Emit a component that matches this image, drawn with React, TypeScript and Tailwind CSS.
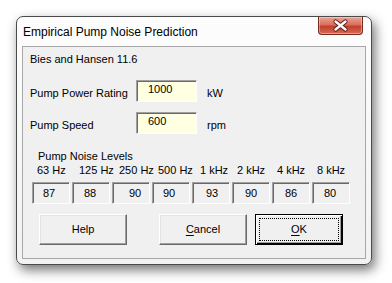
const FONT = "font-['Liberation_Sans',Arial,sans-serif]";

type Band = { label: string; value: string; lp: number; vp: number };

const BANDS: Band[] = [
  { label: "63 Hz", value: "87", lp: 6, vp: 11 },
  { label: "125 Hz", value: "88", lp: 8, vp: 12 },
  { label: "250 Hz", value: "90", lp: 8, vp: 17 },
  { label: "500 Hz", value: "90", lp: 7, vp: 11 },
  { label: "1 kHz", value: "93", lp: 9, vp: 14 },
  { label: "2 kHz", value: "90", lp: 6, vp: 13 },
  { label: "4 kHz", value: "86", lp: 6, vp: 13 },
  { label: "8 kHz", value: "80", lp: 6, vp: 12 },
];

function CloseButton() {
  return (
    <div className="ml-auto mr-[8px] h-[18px] w-[45px] rounded-b-[4px] border border-t-0 border-[#7a2a20] bg-[linear-gradient(#e9a597_0%,#d9705e_45%,#c2402c_55%,#d66a55_100%)] shadow-[inset_0_0_0_1px_rgba(255,255,255,0.35)]">
      <svg width="43" height="17" viewBox="0 0 43 17">
        <path d="M16.5 4.5 L26.5 12.5 M26.5 4.5 L16.5 12.5" stroke="#5b1a12" strokeWidth="4.2" strokeLinecap="round" fill="none" />
        <path d="M16.5 4.5 L26.5 12.5 M26.5 4.5 L16.5 12.5" stroke="#ffffff" strokeWidth="2.4" strokeLinecap="round" fill="none" />
      </svg>
    </div>
  );
}

function Field({ label, value, unit }: { label: string; value: string; unit: string }) {
  return (
    <div className="flex h-[22px] items-start">
      <span className="mt-[7px] w-[106px] leading-[13px]">{label}</span>
      <div className="h-[22px] w-[61px] border border-t-[#a0a0a0] border-l-[#a0a0a0] border-r-white border-b-white bg-[#ffffe1] pl-[11px] pt-[2px] leading-[13px] shadow-[inset_1px_1px_0_#696969]">
        {value}
      </div>
      <span className="ml-[10px] mt-[7px] leading-[13px]">{unit}</span>
    </div>
  );
}

function Button({ children, def }: { children: React.ReactNode; def?: boolean }) {
  if (def) {
    return (
      <div className="flex h-[31px] w-[88px] border border-black bg-[#f0f0f0] p-[1px] shadow-[inset_1px_1px_0_#ffffff,inset_-1px_-1px_0_#000000,inset_-2px_-2px_0_#a0a0a0]">
        <div className="m-[2px] flex flex-1 items-center justify-center border border-dotted border-black">
          {children}
        </div>
      </div>
    );
  }
  return (
    <div className="flex h-[31px] w-[88px] items-center justify-center border border-t-white border-l-white border-r-[#696969] border-b-[#696969] bg-[#f0f0f0] shadow-[inset_-1px_-1px_0_#a0a0a0,inset_1px_1px_0_#e3e3e3]">
      {children}
    </div>
  );
}

export default function App() {
  return (
    <div className={`h-[283px] w-[392px] bg-white pl-[16px] pt-[16px] text-[11px] text-black ${FONT}`}>
      <div className="flex h-[249px] w-[356px] flex-col rounded-[7px] border border-[#4a4a4a] bg-[linear-gradient(#fdfdfd,#f2f2f2)] shadow-[3px_5px_12px_rgba(0,0,0,0.55)]">
        <div className="flex h-[29px] items-start">
          <span className="ml-[6px] mt-[8px] text-[12px] leading-[14px]">Empirical Pump Noise Prediction</span>
          <CloseButton />
        </div>
        <div className="mx-[5px] h-[213px] border border-[#a8a8a8] bg-[#f0f0f0] pl-[7px]">
          <div className="mt-[6px] leading-[13px]">Bies and Hansen 11.6</div>
          <div className="mt-[14px] flex flex-col gap-[10px]">
            <Field label="Pump Power Rating" value="1000" unit="kW" />
            <Field label="Pump Speed" value="600" unit="rpm" />
          </div>
          <div className="ml-[8px] mt-[16px] leading-[13px]">Pump Noise Levels</div>
          <div className="ml-[2px] mt-[1px] grid grid-cols-[repeat(8,40px)]">
            {BANDS.map((b) => (
              <div key={b.label} className="whitespace-nowrap leading-[13px]" style={{ paddingLeft: b.lp - 1 }}>
                {b.label}
              </div>
            ))}
          </div>
          <div className="ml-[2px] mt-[5px] grid grid-cols-[repeat(8,40px)]">
            {BANDS.map((b, i) => (
              <div
                key={i}
                className="h-[22px] w-[38px] border border-t-[#a0a0a0] border-l-[#a0a0a0] border-r-white border-b-white pt-[4px] leading-[13px] shadow-[inset_1px_1px_0_#696969]"
                style={{ paddingLeft: b.vp - 1 }}
              >
                {b.value}
              </div>
            ))}
          </div>
          <div className="ml-[9px] mt-[10px] flex">
            <Button>Help</Button>
            <div className="ml-[32px]">
              <Button>
                <span>
                  <span className="underline underline-offset-2">C</span>ancel
                </span>
              </Button>
            </div>
            <div className="ml-[8px]">
              <Button def>
                <span>
                  <span className="underline underline-offset-2">O</span>K
                </span>
              </Button>
            </div>
          </div>
        </div>
      </div>
    </div>
  );
}
